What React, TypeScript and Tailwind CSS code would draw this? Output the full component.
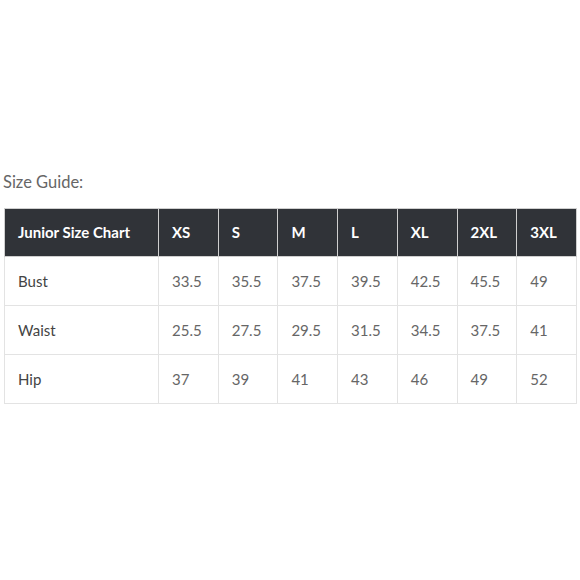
const sizes = ["XS", "S", "M", "L", "XL", "2XL", "3XL"];

const rows = [
  { label: "Bust", values: ["33.5", "35.5", "37.5", "39.5", "42.5", "45.5", "49"] },
  { label: "Waist", values: ["25.5", "27.5", "29.5", "31.5", "34.5", "37.5", "41"] },
  { label: "Hip", values: ["37", "39", "41", "43", "46", "49", "52"] },
];

export default function App() {
  return (
    <div className="w-[580px] h-[580px] bg-white font-['Lato','Open_Sans',sans-serif]">
      <div className="pt-[172px] pl-[3px] text-[16.5px] leading-5 text-[#666]">Size Guide:</div>
      <table className="mt-[16px] ml-[4px] w-[573px] table-fixed border-collapse text-[15px]">
        <colgroup>
          <col className="w-[154px]" />
          {sizes.map((s) => (
            <col key={s} />
          ))}
        </colgroup>
        <thead>
          <tr className="h-[48px] bg-[#303338] text-white">
            <th className="border border-[#cfcfcf] pl-[13px] text-left font-bold">Junior Size Chart</th>
            {sizes.map((s) => (
              <th key={s} className="border border-[#cfcfcf] pl-[13px] text-left font-bold">
                {s}
              </th>
            ))}
          </tr>
        </thead>
        <tbody>
          {rows.map((r) => (
            <tr key={r.label} className="h-[49px]">
              <td className="border border-[#e3e3e3] pl-[13px] text-[#444]">{r.label}</td>
              {r.values.map((v, i) => (
                <td key={i} className="border border-[#e3e3e3] pl-[13px] text-[#666]">
                  {v}
                </td>
              ))}
            </tr>
          ))}
        </tbody>
      </table>
    </div>
  );
}
